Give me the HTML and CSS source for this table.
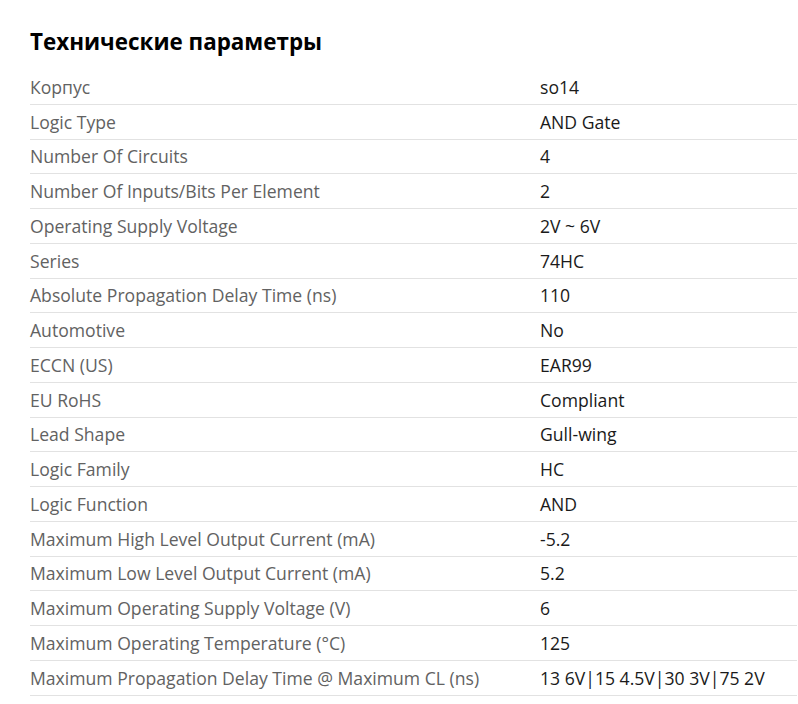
FILE: index.html
```html
<!DOCTYPE html>
<html lang="ru">
<head>
<meta charset="utf-8">
<title>Технические параметры</title>
<link rel="stylesheet" href="styles.css">
</head>
<body>
<section class="specs">
  <h2 class="specs-title">Технические параметры</h2>
  <div class="specs-table">
    <div class="row"><span class="label">Корпус</span><span class="value">so14</span></div>
    <div class="row"><span class="label">Logic Type</span><span class="value">AND Gate</span></div>
    <div class="row"><span class="label">Number Of Circuits</span><span class="value">4</span></div>
    <div class="row"><span class="label">Number Of Inputs/Bits Per Element</span><span class="value">2</span></div>
    <div class="row"><span class="label">Operating Supply Voltage</span><span class="value">2V ~ 6V</span></div>
    <div class="row"><span class="label">Series</span><span class="value">74HC</span></div>
    <div class="row"><span class="label">Absolute Propagation Delay Time (ns)</span><span class="value">110</span></div>
    <div class="row"><span class="label">Automotive</span><span class="value">No</span></div>
    <div class="row"><span class="label">ECCN (US)</span><span class="value">EAR99</span></div>
    <div class="row"><span class="label">EU RoHS</span><span class="value">Compliant</span></div>
    <div class="row"><span class="label">Lead Shape</span><span class="value">Gull-wing</span></div>
    <div class="row"><span class="label">Logic Family</span><span class="value">HC</span></div>
    <div class="row"><span class="label">Logic Function</span><span class="value">AND</span></div>
    <div class="row"><span class="label">Maximum High Level Output Current (mA)</span><span class="value">-5.2</span></div>
    <div class="row"><span class="label">Maximum Low Level Output Current (mA)</span><span class="value">5.2</span></div>
    <div class="row"><span class="label">Maximum Operating Supply Voltage (V)</span><span class="value">6</span></div>
    <div class="row"><span class="label">Maximum Operating Temperature (°C)</span><span class="value">125</span></div>
    <div class="row"><span class="label">Maximum Propagation Delay Time @ Maximum CL (ns)</span><span class="value">13 6V|15 4.5V|30 3V|75 2V</span></div>
  </div>
</section>
</body>
</html>
```
FILE: styles.css
```css
html, body {
  margin: 0;
  padding: 0;
  background: #ffffff;
}

body {
  font-family: "Open Sans", "Liberation Sans", sans-serif;
}

.specs {
  padding: 28px 1px 0 30px;
}

.specs-title {
  margin: 0 0 14px 0;
  font-size: 22.4px;
  line-height: 28px;
  font-weight: 700;
  color: #000000;
}

.specs-table {
  display: flex;
  flex-direction: column;
}

.row {
  display: grid;
  grid-template-columns: 510px 1fr;
  padding: 4.88px 0;
  line-height: 24px;
  font-size: 17.6px;
  border-bottom: 1px solid #e2e2e2;
}

.label {
  color: #626262;
}

.value {
  color: #1a1a1a;
}
```
